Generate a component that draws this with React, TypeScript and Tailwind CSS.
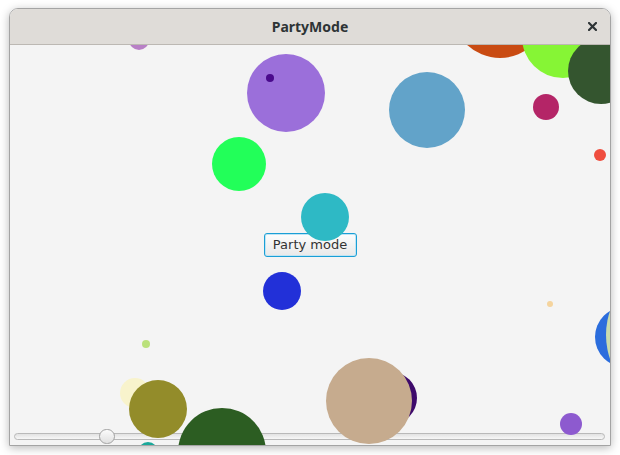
const circles = [
  { x: 490, y: -35, r: 48, c: "#c94b12" },
  { x: 553, y: -8, r: 41, c: "#86f535" },
  { x: 591, y: 26, r: 33, c: "#34552f" },
  { x: 128.5, y: -5, r: 10, c: "#b880c6" },
  { x: 276, y: 48, r: 39, c: "#9b6fda" },
  { x: 260, y: 33, r: 4, c: "#4a0a8c" },
  { x: 229, y: 119, r: 27, c: "#22ff59" },
  { x: 315, y: 172, r: 24, c: "#2eb9c5" },
  { x: 417, y: 65, r: 38, c: "#62a3c9" },
  { x: 536, y: 61.5, r: 13, c: "#b42567" },
  { x: 590, y: 110, r: 6, c: "#ef4d3e" },
  { x: 272, y: 246, r: 19, c: "#2230d8" },
  { x: 540, y: 259, r: 3, c: "#f5d49e" },
  { x: 136, y: 299, r: 4, c: "#bae17b" },
  { x: 615, y: 291.5, r: 30, c: "#2b6ddd" },
  { x: 670, y: 290, r: 74, c: "#c9dbae" },
  { x: 125, y: 348, r: 15, c: "#f8f3cc" },
  { x: 148, y: 364, r: 29, c: "#938c2a" },
  { x: 138, y: 407, r: 10, c: "#1aa89a" },
  { x: 212, y: 407, r: 44, c: "#2c5d22" },
  { x: 381, y: 353, r: 26, c: "#3e0a6b" },
  { x: 359, y: 355.5, r: 43, c: "#c6ab8e" },
  { x: 561, y: 379, r: 11, c: "#8d5acf" },
];

function TitleBar() {
  return (
    <div className="grid h-[36px] grid-cols-[1fr_auto_1fr] items-center rounded-t-[8px] border-b border-[#bcb8b3] bg-[#dfdcd8]">
      <div />
      <span className="font-['Noto_Sans',sans-serif] text-[14px] font-bold text-[#2e3436]">
        PartyMode
      </span>
      <div className="flex justify-end pr-[13px]">
        <svg width="9" height="9" viewBox="0 0 9 9">
          <path d="M1 1L8 8M8 1L1 8" stroke="#2e3436" strokeWidth="2.2" strokeLinecap="square" />
        </svg>
      </div>
    </div>
  );
}

function Slider() {
  return (
    <div className="relative mb-[1px] ml-[4px] mr-[5px] flex h-[15px] items-center self-end [grid-area:1/1]">
      <div className="h-[7px] w-full rounded-full border border-[#b9b9b9] bg-gradient-to-b from-[#e2e2e2] to-[#f7f7f7]" />
      <div className="absolute left-[85px] top-0 h-[15px] w-[16px] rounded-full border border-[#a2a2a2] bg-gradient-to-b from-[#fbfbfb] to-[#e0e0e0]" />
    </div>
  );
}

export default function App() {
  return (
    <div className="h-[455px] w-[620px] bg-white pl-[9px] pt-[8px]">
      <div className="w-[602px] rounded-t-[9px] border border-[#a4a4a4] shadow-[0_2px_10px_rgba(0,0,0,0.28)]">
        <TitleBar />
        <div className="relative grid h-[400px] overflow-hidden bg-[#f4f4f4]">
          <button className="h-[24px] w-[93px] self-center justify-self-center rounded-[3px] border border-[#1a9fd6] bg-gradient-to-b from-[#fdfdfd] to-[#e9e9e9] font-['DejaVu_Sans',sans-serif] text-[13px] text-[#333333] shadow-[inset_0_0_0_1px_#bfe4f4] [grid-area:1/1]">
            Party mode
          </button>
          <Slider />
          <div className="pointer-events-none absolute inset-0">
            {circles.map((b, i) => (
              <div
                key={i}
                className="absolute rounded-full"
                style={{
                  left: b.x - b.r,
                  top: b.y - b.r,
                  width: b.r * 2,
                  height: b.r * 2,
                  background: b.c,
                }}
              />
            ))}
          </div>
        </div>
      </div>
    </div>
  );
}
